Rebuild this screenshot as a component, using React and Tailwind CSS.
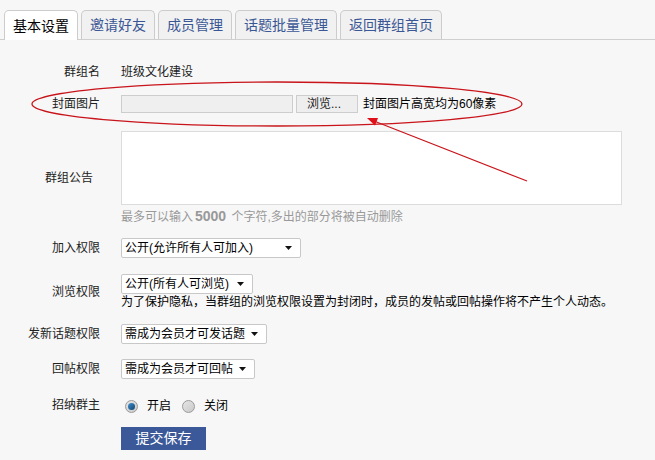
import React from 'react';

const tabs = ['基本设置', '邀请好友', '成员管理', '话题批量管理', '返回群组首页'];

const Select = ({ value, width }) => (
    <div className={`flex items-center justify-between h-[20px] bg-white border border-[#c8c8c8] rounded-[2px] pl-[3px] pr-[8px] text-[12px] text-black ${width}`}>
        <span className="leading-[16px] whitespace-nowrap">{value}</span>
        <svg width="7" height="4" viewBox="0 0 7 4"><path d="M0 0h7L3.5 4z" fill="#111" /></svg>
    </div>
);

const Radio = ({ checked }) => (
    <span className="relative inline-flex items-center justify-center w-[13px] h-[13px] rounded-full border border-[#9a9a9a] bg-gradient-to-br from-[#e6e6e6] to-[#c9c9c9]">
        {checked && <span className="w-[7px] h-[7px] rounded-full bg-gradient-to-br from-[#3f8fd0] to-[#13456f]" />}
    </span>
);

const Row = ({ label, pr = 'pr-0', className = '', children }) => (
    <div className={`flex items-center ${className}`}>
        <div className={`w-[100px] shrink-0 text-right text-[12px] leading-[16px] text-[#222] ${pr}`}>{label}</div>
        <div className="ml-[21px] flex">{children}</div>
    </div>
);

export default function App() {
    return (
        <div className="relative w-[655px] h-[460px] overflow-hidden bg-[#f7f7f7] text-[12px] leading-[16px] font-['Liberation_Sans','Noto_Sans_CJK_SC',sans-serif]">
            {/* tabs */}
            <div className="flex items-end gap-[3px] pl-[4px] h-[40px] border-b border-[#cfcfcf]">
                {tabs.map((t, i) => (
                    <div
                        key={t}
                        className={`h-[29px] px-[8px] flex items-center border border-b-0 border-[#cccccc] rounded-t-[5px] text-[14px] leading-[18px] ${i === 0 ? 'bg-white text-black h-[30px] -mb-px' : 'bg-[#f1f1f1] text-[#3a5795]'}`}
                    >
                        {t}
                    </div>
                ))}
            </div>

            <div className="flex flex-col">
                <Row label="群组名" className="mt-[24px]">
                    <span className="text-[12px] leading-[16px] text-[#222]">班级文化建设</span>
                </Row>

                <Row label="封面图片" className="mt-[15px]">
                    <div className="flex items-center">
                        <div className="w-[172px] h-[18px] bg-[#efefef] border border-[#cdcdcd]" />
                        <div className="ml-[3px] w-[62px] h-[18px] bg-[#eeeeee] border border-[#cdcdcd] text-[12px] leading-[16px] text-[#222] pl-[10px]">浏览...</div>
                        <span className="ml-[5px] text-[12px] leading-[16px] text-black">封面图片高宽均为60像素</span>
                    </div>
                </Row>

                <Row label="群组公告" pr="pr-[7px]" className="mt-[18px]">
                    <div className="flex flex-col">
                        <div className="w-[501px] h-[74px] bg-white border border-[#dcdcdc]" />
                        <div className="mt-[3px] text-[12px] leading-[16px] text-[#999]">
                            最多可以输入<span className="text-[14px] font-bold mx-[2px]">5000</span> 个字符,多出的部分将被自动删除
                        </div>
                    </div>
                </Row>

                <Row label="加入权限" className="mt-[13px]">
                    <Select value="公开(允许所有人可加入)" width="w-[180px]" />
                </Row>

                <Row label="浏览权限" className="mt-[16px]">
                    <div className="flex flex-col items-start">
                        <Select value="公开(所有人可浏览)" width="w-[132px]" />
                        <div className="text-[12px] leading-[16px] text-black whitespace-nowrap">为了保护隐私，当群组的浏览权限设置为封闭时，成员的发帖或回帖操作将不产生个人动态。</div>
                    </div>
                </Row>

                <Row label="发新话题权限" className="mt-[14px]">
                    <Select value="需成为会员才可发话题" width="w-[146px]" />
                </Row>

                <Row label="回帖权限" className="mt-[15px]">
                    <Select value="需成为会员才可回帖" width="w-[134px]" />
                </Row>

                <Row label="招纳群主" className="mt-[16px]">
                    <div className="flex items-center text-[12px] leading-[16px] text-black pt-[3px] pl-[4px]">
                        <Radio checked />
                        <span className="ml-[9px]">开启</span>
                        <span className="ml-[11px] flex"><Radio /></span>
                        <span className="ml-[9px]">关闭</span>
                    </div>
                </Row>

                <div className="ml-[121px] mt-[13px] w-[85px] h-[23px] bg-[#3b5998] text-white text-[14px] leading-[23px] text-center">提交保存</div>
            </div>

            {/* red annotation */}
            <svg className="absolute inset-0 pointer-events-none" width="655" height="460" viewBox="0 0 655 460">
                <ellipse cx="277" cy="104" rx="245" ry="22" fill="none" stroke="#c8141a" strokeWidth="1.3" />
                <line x1="527" y1="181" x2="374" y2="121" stroke="#c8141a" strokeWidth="1.2" />
                <polygon points="367,118 378,118 375,125.5" fill="#e0101a" />
            </svg>
        </div>
    );
}
